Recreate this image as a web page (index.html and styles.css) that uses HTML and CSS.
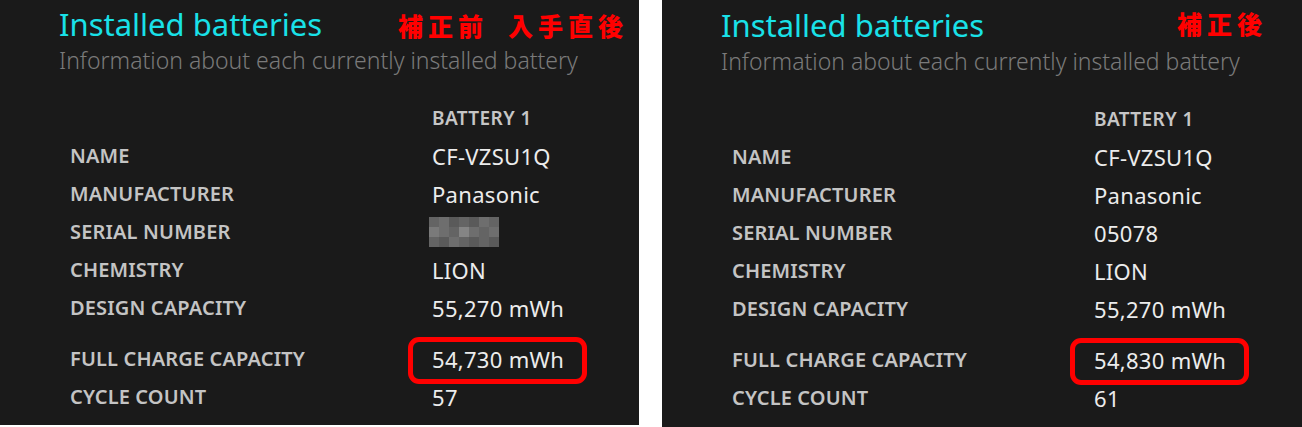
FILE: index.html
```html
<!DOCTYPE html>
<html lang="en">
<head>
  <meta charset="UTF-8" />
  <title>Installed batteries</title>
  <link rel="stylesheet" href="styles.css">
</head>
<body>
  <div class="page">

    <section class="panel">
      <h1 class="title">Installed batteries</h1>
      <p class="sub">Information about each currently installed battery</p>
      <div class="note note-left"><span>補正前</span><span class="gap">入手直後</span></div>
      <table class="info">
        <tr><td></td><th>BATTERY 1</th></tr>
        <tr><td class="label">NAME</td><td class="value">CF-VZSU1Q</td></tr>
        <tr><td class="label">MANUFACTURER</td><td class="value">Panasonic</td></tr>
        <tr>
          <td class="label">SERIAL NUMBER</td>
          <td class="value">
            <div class="mosaic">
              <i class="g2"></i><i class="g3"></i><i class="g1"></i><i class="g2"></i><i class="g1"></i><i class="g3"></i><i class="g2"></i>
              <i class="g4"></i><i class="g3"></i><i class="g2"></i><i class="g5"></i><i class="g3"></i><i class="g2"></i><i class="g3"></i>
              <i class="g2"></i><i class="g1"></i><i class="g3"></i><i class="g2"></i><i class="g1"></i><i class="g2"></i><i class="g1"></i>
            </div>
          </td>
        </tr>
        <tr><td class="label">CHEMISTRY</td><td class="value">LION</td></tr>
        <tr><td class="label">DESIGN CAPACITY</td><td class="value">55,270 mWh</td></tr>
        <tr class="spaced"><td class="label">FULL CHARGE CAPACITY</td><td class="value"><span class="hl">54,730 mWh</span></td></tr>
        <tr><td class="label">CYCLE COUNT</td><td class="value">57</td></tr>
      </table>
    </section>

    <section class="panel panel-right">
      <h1 class="title">Installed batteries</h1>
      <p class="sub">Information about each currently installed battery</p>
      <div class="note note-right"><span>補正後</span></div>
      <table class="info">
        <tr><td></td><th>BATTERY 1</th></tr>
        <tr><td class="label">NAME</td><td class="value">CF-VZSU1Q</td></tr>
        <tr><td class="label">MANUFACTURER</td><td class="value">Panasonic</td></tr>
        <tr><td class="label">SERIAL NUMBER</td><td class="value">05078</td></tr>
        <tr><td class="label">CHEMISTRY</td><td class="value">LION</td></tr>
        <tr><td class="label">DESIGN CAPACITY</td><td class="value">55,270 mWh</td></tr>
        <tr class="spaced"><td class="label">FULL CHARGE CAPACITY</td><td class="value"><span class="hl">54,830 mWh</span></td></tr>
        <tr><td class="label">CYCLE COUNT</td><td class="value">61</td></tr>
      </table>
    </section>

  </div>
</body>
</html>
```

FILE: styles.css
```css
body {
  margin: 0;
  background: #fff;
  font-family: "Noto Sans", "Open Sans", sans-serif;
}
.page {
  display: flex;
  gap: 23px;
  height: 427px;
}
.panel {
  position: relative;
  width: 639px;
  height: 425px;
  background: #1a1a1a;
  padding: 6px 0 0 59px;
  box-sizing: border-box;
}
.panel-right {
  width: 640px;
  height: 427px;
  padding-top: 7px;
}
.title {
  margin: 0;
  font-size: 31px;
  font-weight: 400;
  line-height: 36px;
  color: #19e1e8;
}
.sub {
  margin: 3px 0 24px;
  font-size: 23px;
  font-weight: 300;
  line-height: 30px;
  color: #7a7a7a;
}
.note {
  position: absolute;
  top: 8px;
  font-family: "Noto Sans CJK JP", sans-serif;
  font-size: 25px;
  font-weight: 900;
  line-height: 34px;
  letter-spacing: 5px;
  color: #ff0000;
}
.note-left {
  right: 11px;
}
.note-right {
  top: 6px;
  right: 35px;
}
.note .gap {
  margin-left: 20px;
}
.info {
  border-collapse: collapse;
  margin-left: 11px;
}
.info td, .info th {
  padding: 0;
  height: 38px;
  line-height: 38px;
  vertical-align: middle;
  text-align: left;
  white-space: nowrap;
}
.info th {
  font-size: 19px;
  font-weight: 600;
  letter-spacing: 0.4px;
  color: #c6c6c6;
}
.label {
  width: 362px;
  font-size: 20px;
  font-weight: 600;
  letter-spacing: 0.15px;
  color: #c4c4c4;
}
.value {
  font-size: 22px;
  letter-spacing: 0.3px;
  color: #ececec;
}
.info .spaced td {
  padding-top: 13px;
}
.hl {
  position: relative;
  display: inline-block;
}
.hl::after {
  content: "";
  position: absolute;
  left: -24px;
  right: -23px;
  top: -3px;
  bottom: -6px;
  border: 5px solid #ff0000;
  border-radius: 11px;
}
.mosaic {
  display: grid;
  grid-template-columns: repeat(7, 10px);
  grid-auto-rows: 10px;
  margin-left: -3px;
  width: 70px;
}
.mosaic i {
  display: block;
}
.g1 { background: #5a5a5a; }
.g2 { background: #646464; }
.g3 { background: #6e6e6e; }
.g4 { background: #7a7a7a; }
.g5 { background: #858585; }
```
